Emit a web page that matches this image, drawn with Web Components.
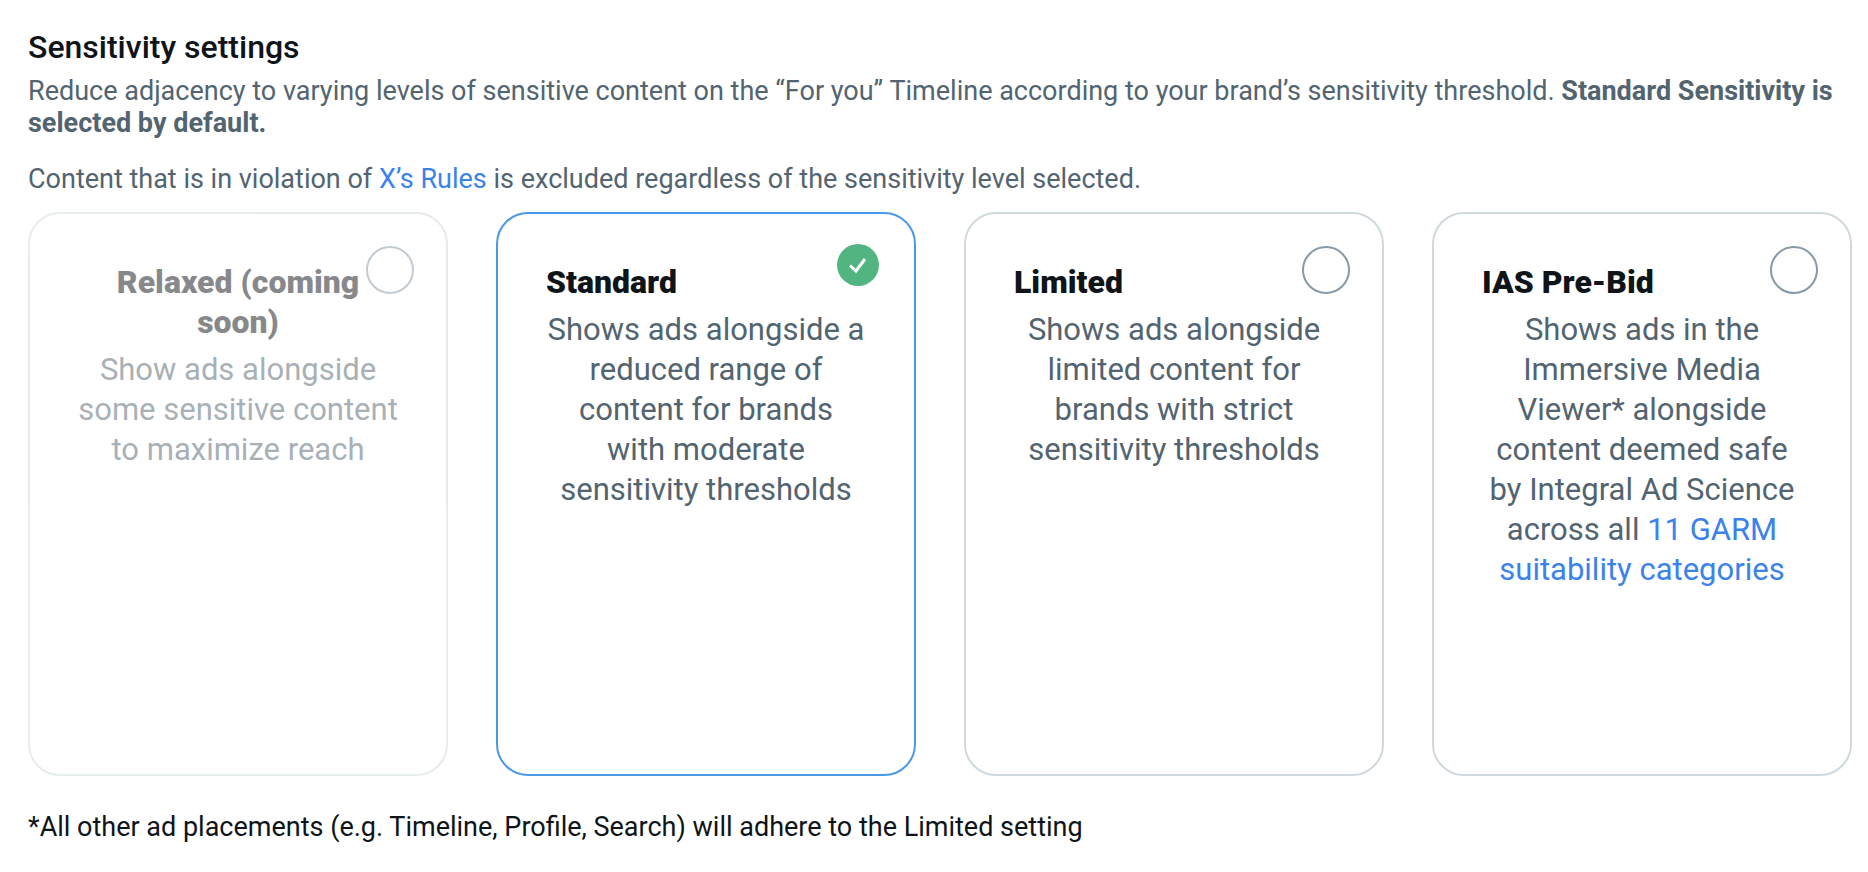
<!DOCTYPE html>
<html lang="en">
<head>
<meta charset="utf-8">
<title>Sensitivity settings</title>
<style>
  body {
    margin: 0;
    background: #fff;
    color: #0f1419;
    font-family: Roboto, "Liberation Sans", sans-serif;
    font-size: 27px;
    line-height: 32px;
  }
  a {
    color: #3b82eb;
    text-decoration: none;
  }
</style>
</head>
<body>
<ss-settings>
  <span slot="heading">Sensitivity settings</span>
  <p slot="intro">Reduce adjacency to varying levels of sensitive content on the “For you” Timeline according to your brand’s sensitivity threshold. <strong>Standard Sensitivity is selected by default.</strong></p>
  <p slot="intro">Content that is in violation of <a href="#rules">X’s Rules</a> is excluded regardless of the sensitivity level selected.</p>
  <ss-option label="Relaxed (coming soon)" value="relaxed" disabled>Show ads alongside some sensitive content to maximize reach</ss-option>
  <ss-option label="Standard" value="standard" checked>Shows ads alongside a reduced range of content for brands with&nbsp;moderate sensitivity thresholds</ss-option>
  <ss-option label="Limited" value="limited">Shows ads alongside limited content for brands with strict sensitivity thresholds</ss-option>
  <ss-option label="IAS Pre-Bid" value="ias">Shows ads in the Immersive Media Viewer* alongside content deemed safe by Integral Ad Science across all <a href="#garm">11 GARM suitability categories</a></ss-option>
  <span slot="footnote">*All other ad placements (e.g. Timeline, Profile, Search) will adhere to the Limited setting</span>
</ss-settings>

<script>
'use strict';

const optionTemplate = document.createElement('template');
optionTemplate.innerHTML = `
<style>
  :host {
    display: flex;
    flex-direction: column;
    align-items: flex-start;
    gap: 8px;
    position: relative;
    box-sizing: border-box;
    min-height: 564px;
    padding: 48px;
    border: 2px solid #cfd9de;
    border-radius: 32px;
    font-size: 31px;
    line-height: 40px;
    text-align: center;
  }
  :host([checked]) {
    border-color: #4a99e9;
  }
  :host([disabled]) {
    opacity: 0.5;
  }
  label {
    font-size: 32px;
    font-weight: 900;
  }
  .description {
    align-self: stretch;
    color: #536471;
  }
  .mark {
    position: absolute;
    top: 32px;
    right: 32px;
    display: flex;
  }
  input {
    appearance: none;
    box-sizing: border-box;
    width: 48px;
    height: 48px;
    margin: 0;
    border: 2px solid #8899a6;
    border-radius: 50%;
  }
  svg {
    display: none;
    position: absolute;
    inset: 0;
    pointer-events: none;
  }
  :host([checked]) .mark {
    top: 30px;
    right: 35px;
  }
  :host([checked]) input {
    width: 42px;
    height: 42px;
    border: 0;
    background: #52b581;
  }
  :host([checked]) svg {
    display: block;
  }
</style>
<label for="choice"></label>
<div class="description"><slot></slot></div>
<div class="mark">
  <input type="radio" id="choice">
  <svg width="42" height="42" viewBox="0 0 42 42" aria-hidden="true">
    <path d="M13 21.5l6 5.5 9-12" fill="none" stroke="#fff" stroke-width="3"/>
  </svg>
</div>`;

class SensitivityOption extends HTMLElement {
	static get observedAttributes() {
		return ['label', 'value', 'checked', 'disabled'];
	}

	constructor() {
		super();
		const shadow = this.attachShadow({mode: 'open'});
		shadow.appendChild(optionTemplate.content.cloneNode(true));
		shadow.querySelector('input').addEventListener('change', () => {
			this.dispatchEvent(new CustomEvent('option-select', { bubbles: true }));
		});
	}

	attributeChangedCallback(name, oldValue, newValue) {
		const input = this.shadowRoot.querySelector('input');
		switch (name) {
		case 'label':
			this.shadowRoot.querySelector('label').textContent = newValue;
			break;
		case 'value':
			input.value = newValue;
			break;
		default:
			input[name] = newValue !== null;
		}
	}
}

customElements.define('ss-option', SensitivityOption);

const settingsTemplate = document.createElement('template');
settingsTemplate.innerHTML = `
<style>
  :host {
    display: block;
    padding: 31px 16px 28px 28px;
  }
  h1 {
    margin: 0 0 12px;
    font-size: 32px;
    font-weight: 500;
    line-height: 32px;
  }
  .intro {
    display: flex;
    flex-direction: column;
    gap: 24px;
    margin-bottom: 17px;
    color: #536471;
  }
  ::slotted(p) {
    margin: 0;
  }
  .options {
    display: grid;
    grid-template-columns: repeat(4, 1fr);
    gap: 48px;
  }
  footer {
    margin-top: 35px;
  }
</style>
<h1><slot name="heading"></slot></h1>
<div class="intro"><slot name="intro"></slot></div>
<div class="options" role="radiogroup" aria-label="Sensitivity"><slot></slot></div>
<footer><slot name="footnote"></slot></footer>`;

class SensitivitySettings extends HTMLElement {
	constructor() {
		super();
		const shadow = this.attachShadow({mode: 'open'});
		shadow.appendChild(settingsTemplate.content.cloneNode(true));
		this.addEventListener('option-select', this._handleSelect);
	}

	// radios in separate shadow roots don't share a group
	_handleSelect(evt) {
		this.querySelectorAll('ss-option').forEach((option) => {
			option.toggleAttribute('checked', option === evt.target);
		});
	}
}

customElements.define('ss-settings', SensitivitySettings);
</script>
</body>
</html>
